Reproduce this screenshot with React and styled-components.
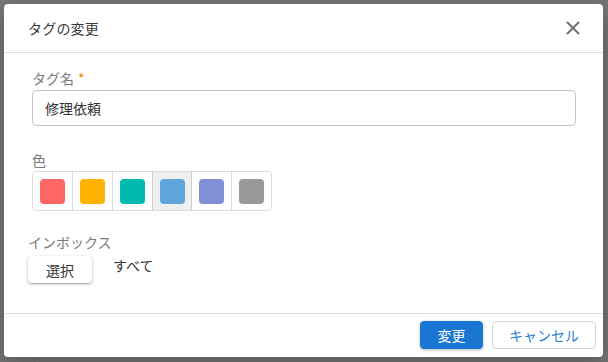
import styled, { createGlobalStyle } from "styled-components";
import { useState } from "react";

const GlobalStyle = createGlobalStyle`
  html, body {
    margin: 0;
    padding: 0;
  }
  body {
    font-family: "Noto Sans CJK JP", "Noto Sans", sans-serif;
    background: #757575;
  }
  * {
    box-sizing: border-box;
  }
`;

const Backdrop = styled.div`
  width: 608px;
  height: 362px;
  padding: 4px 5px 5px 4px;
  background-color: #757575;
  background-image: linear-gradient(
      to right,
      transparent 22px,
      #6c6c6c 22px,
      #6c6c6c 23px,
      transparent 23px,
      transparent 34px,
      #6c6c6c 34px,
      #6c6c6c 35px,
      transparent 35px
    );
`;

const Dialog = styled.div`
  width: 599px;
  height: 353px;
  background: #fff;
  border-radius: 4px;
  box-shadow: 0 8px 24px rgba(0, 0, 0, 0.25);
  display: flex;
  flex-direction: column;
  overflow: hidden;
`;

const Header = styled.div`
  height: 49px;
  flex-shrink: 0;
  display: flex;
  align-items: center;
  justify-content: space-between;
  padding: 0 21px 0 24px;
  border-bottom: 1px solid #dedede;
`;

const Title = styled.h2`
  margin: 0;
  font-size: 14px;
  font-weight: 400;
  color: #3a3a3a;
  letter-spacing: 0.2px;
`;

const CloseButton = styled.button`
  border: none;
  background: none;
  padding: 0;
  width: 18px;
  height: 18px;
  display: flex;
  align-items: center;
  justify-content: center;
  cursor: pointer;
`;

const Body = styled.div`
  flex: 1;
  padding: 15px 24px 0 24px;
  display: flex;
  flex-direction: column;
`;

const Field = styled.div`
  display: flex;
  flex-direction: column;
  align-items: flex-start;
  padding: ${(p) => (p.$inset ? "0 3px 0 4px" : "0")};
  margin-bottom: ${(p) => p.$gap || 0}px;
`;

const Label = styled.label`
  font-size: 14px;
  line-height: 20px;
  color: #7a7a7a;
  margin-bottom: ${(p) => p.$gap || 0}px;
`;

const Required = styled.span`
  color: #f57c00;
  margin-left: 4px;
`;

const Input = styled.input`
  width: 100%;
  height: 36px;
  border: 1px solid #c4c4c4;
  border-radius: 4px;
  padding: 0 12px;
  font-family: inherit;
  font-size: 14px;
  color: #333;
  outline: none;
`;

const SwatchGroup = styled.div`
  display: flex;
  border: 1px solid #dcdcdc;
  border-radius: 4px;
  overflow: hidden;
`;

const SwatchCell = styled.button`
  width: 40px;
  height: 38px;
  padding: 0;
  border: none;
  border-left: 1px solid ${(p) => (p.$active ? "#cfcfcf" : "#dcdcdc")};
  border-right: ${(p) => (p.$active ? "1px solid #cfcfcf" : "none")};
  margin-right: ${(p) => (p.$active ? "-1px" : "0")};
  position: relative;
  z-index: ${(p) => (p.$active ? 1 : 0)};
  background: ${(p) => (p.$active ? "#efefef" : "#fff")};
  display: flex;
  align-items: center;
  justify-content: center;
  cursor: pointer;
  &:first-child {
    border-left: none;
    width: 39px;
  }
`;

const Swatch = styled.span`
  width: 25px;
  height: 25px;
  border-radius: 4px;
  background: ${(p) => p.color};
`;

const InboxRow = styled.div`
  display: flex;
  align-items: flex-start;
  gap: 21px;
`;

const SelectButton = styled.button`
  width: 64px;
  height: 27px;
  border: none;
  border-radius: 4px;
  background: #fff;
  box-shadow: 0 1px 3px rgba(0, 0, 0, 0.3), 0 1px 1px rgba(0, 0, 0, 0.12);
  font-family: inherit;
  font-size: 14px;
  color: #333;
  cursor: pointer;
`;

const InboxValue = styled.span`
  font-size: 14px;
  line-height: 20px;
  color: #333;
  margin-top: -1px;
`;

const Footer = styled.div`
  height: 44px;
  flex-shrink: 0;
  border-top: 1px solid #dedede;
  display: flex;
  align-items: center;
  justify-content: flex-end;
  gap: 9px;
  padding: 0 7px 2px 0;
`;

const Button = styled.button`
  height: 28px;
  padding: 0;
  width: ${(p) => p.$width}px;
  border-radius: 4px;
  font-family: inherit;
  font-size: 14px;
  cursor: pointer;
  border: 1px solid ${(p) => (p.$primary ? "#1976d2" : "#d6d6d6")};
  background: ${(p) => (p.$primary ? "#1976d2" : "#fff")};
  color: ${(p) => (p.$primary ? "#fff" : "#2a7fd4")};
  box-shadow: ${(p) =>
    p.$primary ? "0 1px 3px rgba(0, 0, 0, 0.3)" : "none"};
`;

const colors = ["#ff6666", "#ffb300", "#00bbad", "#5da5db", "#808fd6", "#999999"];

const App = () => {
  const [name, setName] = useState("修理依頼");
  const [selected, setSelected] = useState(3);

  return (
    <Backdrop>
      <GlobalStyle />
      <Dialog>
        <Header>
          <Title>タグの変更</Title>
          <CloseButton aria-label="close">
            <svg width="14" height="14" viewBox="0 0 14 14">
              <path
                d="M1 1 L13 13 M13 1 L1 13"
                stroke="#6b6b6b"
                strokeWidth="1.8"
                fill="none"
              />
            </svg>
          </CloseButton>
        </Header>
        <Body>
          <Field $inset $gap={24}>
            <Label $gap={2}>
              タグ名<Required>*</Required>
            </Label>
            <Input value={name} onChange={(e) => setName(e.target.value)} />
          </Field>
          <Field $inset $gap={21}>
            <Label $gap={1}>色</Label>
            <SwatchGroup>
              {colors.map((c, i) => (
                <SwatchCell
                  key={c}
                  $active={i === selected}
                  onClick={() => setSelected(i)}
                >
                  <Swatch color={c} />
                </SwatchCell>
              ))}
            </SwatchGroup>
          </Field>
          <Field>
            <Label $gap={4}>インボックス</Label>
            <InboxRow>
              <SelectButton>選択</SelectButton>
              <InboxValue>すべて</InboxValue>
            </InboxRow>
          </Field>
        </Body>
        <Footer>
          <Button $primary $width={63}>
            変更
          </Button>
          <Button $width={104}>キャンセル</Button>
        </Footer>
      </Dialog>
    </Backdrop>
  );
};

export default App;
